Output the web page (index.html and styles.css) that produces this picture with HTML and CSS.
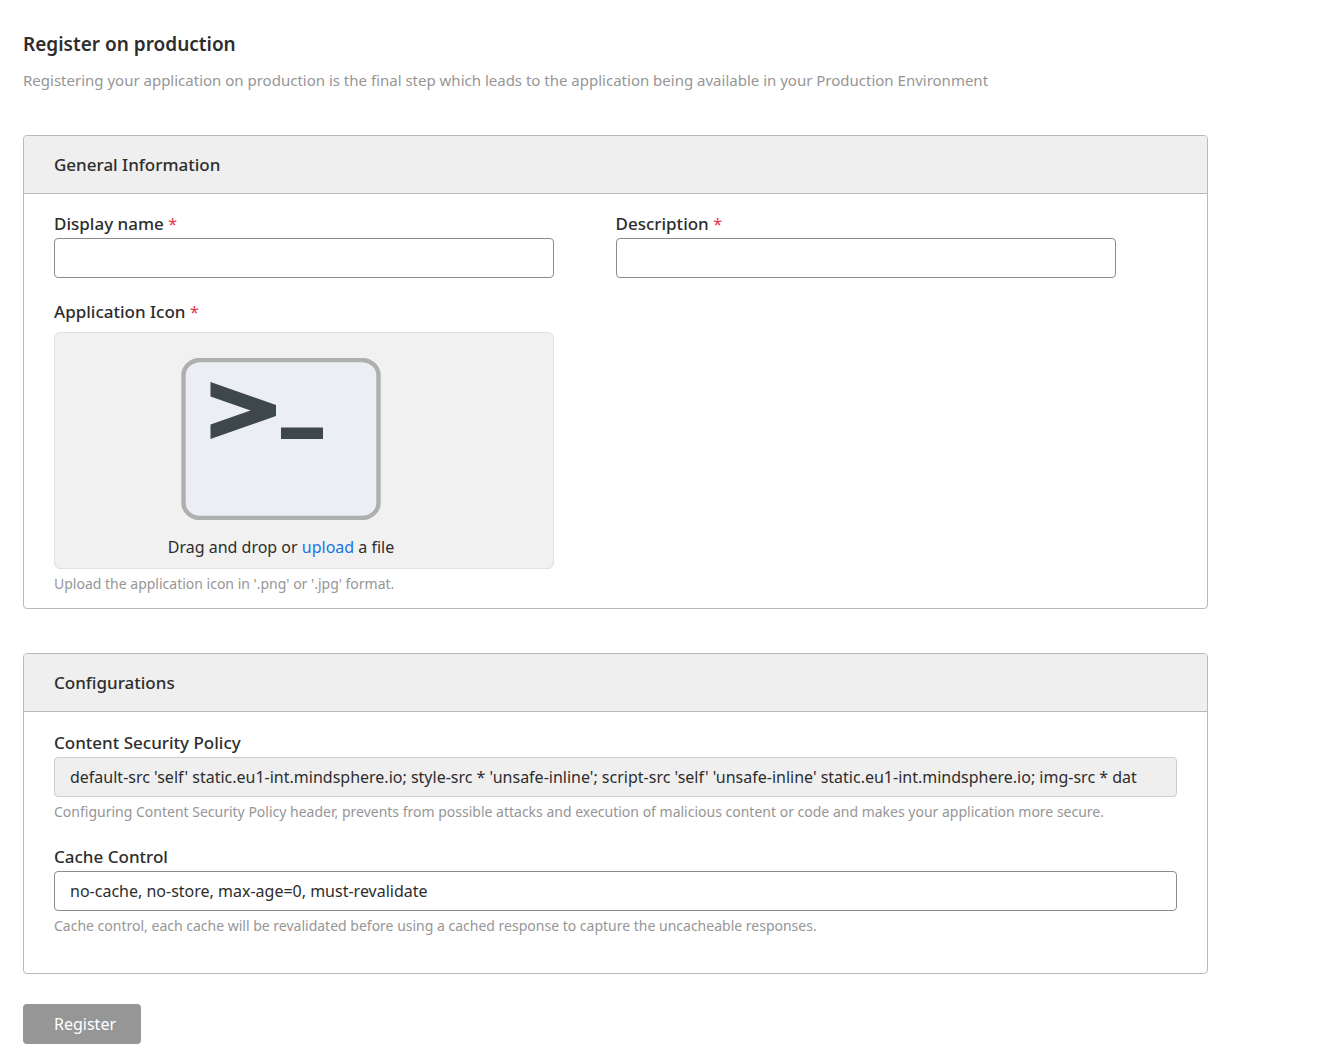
FILE: index.html
```html
<!DOCTYPE html>
<html lang="en">
<head>
<meta charset="utf-8">
<meta name="viewport" content="width=device-width, initial-scale=1">
<title>Register on production</title>
<link rel="stylesheet" href="styles.css">
</head>
<body>
<main class="page">
  <h1 class="page-title">Register on production</h1>
  <p class="page-intro">Registering your application on production is the final step which leads to the application being available in your Production Environment</p>

  <form>
    <section class="panel">
      <h2 class="panel-title">General Information</h2>
      <div class="panel-body">
        <div class="field-row">
          <div class="field">
            <label class="label" for="display-name">Display name <span class="required">*</span></label>
            <input class="input" id="display-name" type="text">
          </div>
          <div class="field">
            <label class="label" for="description">Description <span class="required">*</span></label>
            <input class="input" id="description" type="text">
          </div>
        </div>
        <div class="field icon-field">
          <span class="label">Application Icon <span class="required">*</span></span>
          <div class="dropzone">
            <svg class="app-icon" viewBox="0 0 200 162" role="img" aria-label="Terminal icon">
              <rect x="2.5" y="2" width="195" height="158" rx="17" ry="15" fill="#ebeff3" stroke="#afafaf" stroke-width="4.4"/>
              <path d="M29.5 24 95 47v11L29.5 81V66.500L69.500 52.500 29.500 38.500z" fill="#3e474b"/>
              <path d="M100 69.500h42v11.500H100z" fill="#3e474b"/>
            </svg>
            <p class="drop-text">Drag and drop or <a class="link" href="#">upload</a> a file</p>
          </div>
          <p class="help">Upload the application icon in '.png' or '.jpg' format.</p>
        </div>
      </div>
    </section>

    <section class="panel">
      <h2 class="panel-title">Configurations</h2>
      <div class="panel-body config-body">
        <div>
          <label class="label" for="csp">Content Security Policy</label>
          <input class="input" id="csp" type="text" disabled value="default-src 'self' static.eu1-int.mindsphere.io; style-src * 'unsafe-inline'; script-src 'self' 'unsafe-inline' static.eu1-int.mindsphere.io; img-src * dat">
          <p class="help">Configuring Content Security Policy header, prevents from possible attacks and execution of malicious content or code and makes your application more secure.</p>
        </div>
        <div>
          <label class="label" for="cache">Cache Control</label>
          <input class="input" id="cache" type="text" value="no-cache, no-store, max-age=0, must-revalidate">
          <p class="help">Cache control, each cache will be revalidated before using a cached response to capture the uncacheable responses.</p>
        </div>
      </div>
    </section>

    <button class="button" type="submit" disabled>Register</button>
  </form>
</main>
</body>
</html>
```
FILE: styles.css
```css
* {
  box-sizing: border-box;
}

body {
  margin: 0;
  background: #fff;
  color: #2d2d2d;
  font-family: "Noto Sans", sans-serif;
  font-size: 16px;
  line-height: 24px;
}

h1, h2, p {
  margin: 0;
}

.page {
  padding: 32px 112px 8px 23px;
}

.page-title {
  font-size: 19px;
  font-weight: 600;
}

.page-intro {
  margin: 12px 0 43px;
  color: #969696;
  font-size: 15px;
}

.panel {
  margin-bottom: 44px;
  border: 1px solid #b9b9b9;
  border-radius: 4px;
}

.panel + .panel {
  margin-bottom: 30px;
}

.panel-title {
  padding: 17px 30px 16px;
  border-bottom: 1px solid #b9b9b9;
  border-radius: 3px 3px 0 0;
  background: #efefef;
  font-size: 17px;
  font-weight: 500;
}

.panel-body {
  padding: 18px 30px 14px;
}

.config-body {
  display: grid;
  gap: 23px;
  padding-top: 19px;
  padding-bottom: 37px;
}

.field-row {
  display: grid;
  grid-template-columns: 1fr 1fr;
  margin-bottom: 22px;
}

.field {
  max-width: 500px;
}

.label {
  display: block;
  margin-bottom: 2px;
  font-size: 17px;
  font-weight: 500;
}

.icon-field .label {
  margin-bottom: 8px;
}

.required {
  color: #e8304a;
  font-size: 16px;
  font-weight: 400;
}

.input {
  display: block;
  width: 100%;
  height: 40px;
  padding: 0 15px;
  border: 1px solid #8c8c8c;
  border-radius: 4px;
  background: #fff;
  color: #2d2d2d;
  font: inherit;
}

.input:disabled {
  border-color: #cdcdcd;
  background: #efefef;
}

.dropzone {
  display: flex;
  flex-direction: column;
  align-items: center;
  gap: 15px;
  padding: 25px 46px 9px 0;
  border: 1px solid #e0e0e0;
  border-radius: 6px;
  background: #f1f1f1;
}

.app-icon {
  width: 200px;
  height: 162px;
}

.link {
  color: #1a73e8;
  text-decoration: none;
}

.help {
  margin-top: 5px;
  color: #969696;
  font-size: 14px;
  line-height: 20px;
}

.button {
  height: 40px;
  padding: 0 25px 0 31px;
  border: 0;
  border-radius: 4px;
  background: #969696;
  color: #fff;
  font: inherit;
}
```
